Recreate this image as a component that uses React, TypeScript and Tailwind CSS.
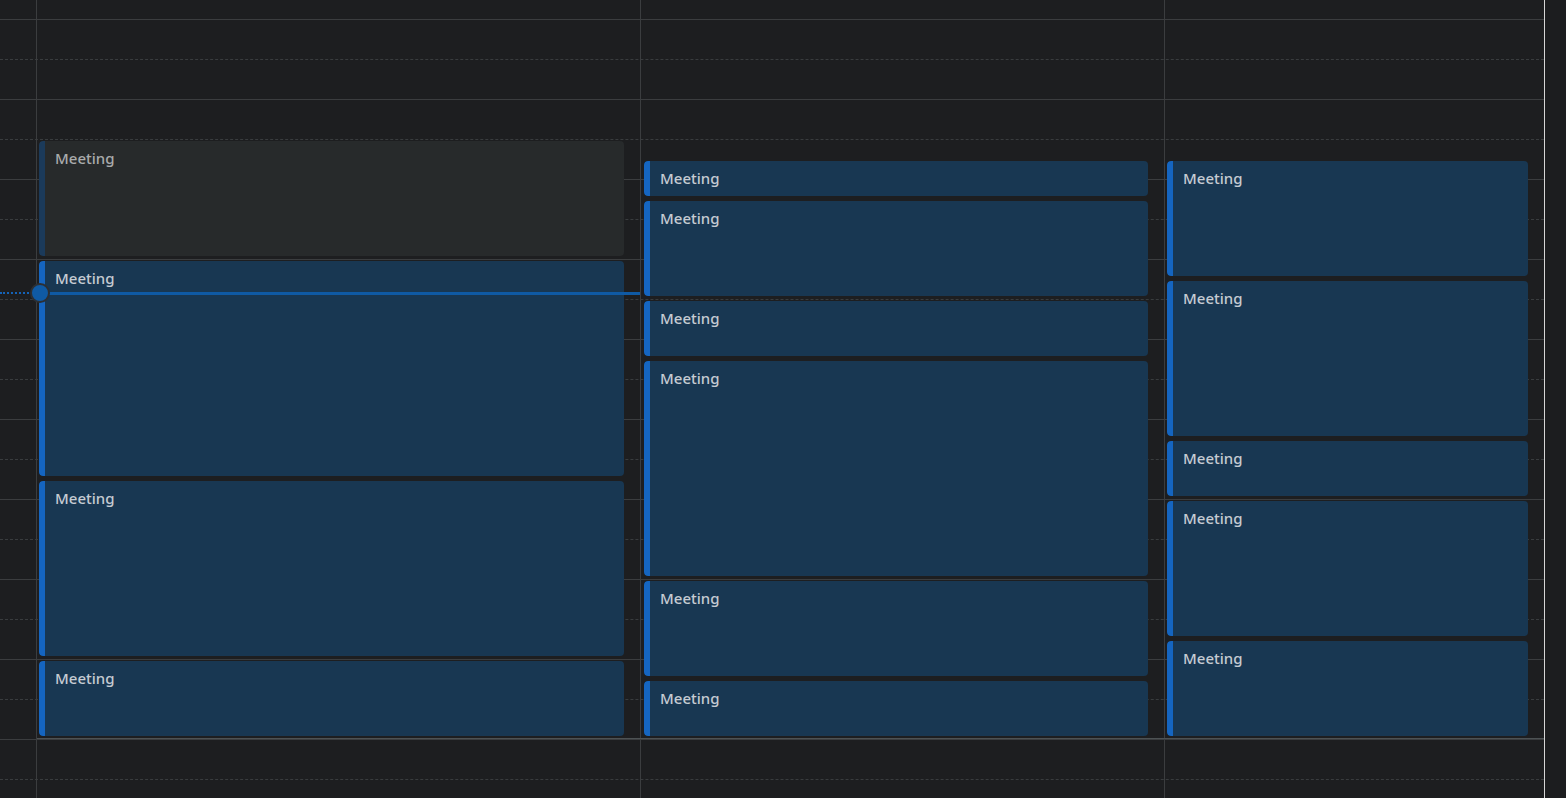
type Ev = { top: number; bottom: number; past?: boolean };

const columns: { width: string; left: number; events: Ev[] }[] = [
  {
    width: 'w-[604px]',
    left: 2,
    events: [
      { top: 141, bottom: 256, past: true },
      { top: 261, bottom: 476 },
      { top: 481, bottom: 656 },
      { top: 661, bottom: 736 },
    ],
  },
  {
    width: 'w-[524px]',
    left: 3,
    events: [
      { top: 161, bottom: 196 },
      { top: 201, bottom: 296 },
      { top: 301, bottom: 356 },
      { top: 361, bottom: 576 },
      { top: 581, bottom: 676 },
      { top: 681, bottom: 736 },
    ],
  },
  {
    width: 'w-[380px]',
    left: 2,
    events: [
      { top: 161, bottom: 276 },
      { top: 281, bottom: 436 },
      { top: 441, bottom: 496 },
      { top: 501, bottom: 636 },
      { top: 641, bottom: 736 },
    ],
  },
];

function EventCard({ ev, left }: { ev: Ev; left: number }) {
  return (
    <div
      className={
        'absolute right-[16px] flex overflow-hidden rounded-[4px] ' +
        (ev.past ? 'bg-[#272a2b]' : 'bg-[#183752]')
      }
      style={{ top: ev.top, height: ev.bottom - ev.top, left }}
    >
      <div
        className={
          'w-[6px] shrink-0 rounded-l-[4px] ' +
          (ev.past ? 'bg-[#1b3a5a]' : 'bg-[#1565c0]')
        }
      />
      <div
        className={
          'pl-[10px] pt-[7px] text-[15px] leading-[20px] font-medium ' +
          (ev.past ? 'text-[#a9abab]' : 'text-[#c5cbd2]')
        }
      >
        Meeting
      </div>
    </div>
  );
}

export default function App() {
  const rows = Array.from({ length: 19 }, (_, i) => i);

  return (
    <div className="relative h-[798px] w-[1566px] overflow-hidden bg-[#1d1e20] font-['Noto_Sans',sans-serif]">
      {/* horizontal grid lines */}
      <div className="pointer-events-none absolute left-0 top-0 flex w-[1544px] flex-col">
        <div className="h-[20px] border-b border-[#3b3d3f]" />
        {rows.map((i) => (
          <div
            key={i}
            className={
              'h-[40px] border-b ' +
              (i % 2 === 0 ? 'border-dashed border-[#393c3e]' : 'border-solid border-[#3b3d3f]')
            }
          />
        ))}
      </div>

      <div className="relative flex h-full">
        <div className="w-[36px] shrink-0" />
        {columns.map((col, ci) => (
          <div
            key={ci}
            className={'relative h-full shrink-0 border-l border-[#3b3d3f] ' + col.width}
          >
            {col.events.map((ev, i) => (
              <EventCard key={i} ev={ev} left={col.left} />
            ))}
          </div>
        ))}
        <div className="h-full w-[22px] shrink-0 border-l border-[#d6d6d6] bg-[#1c1d1f]" />
      </div>

      {/* bottom edge of the scroll area */}
      <div className="absolute left-[37px] top-[738px] h-px w-[1507px] bg-[#4d5254]" />

      {/* current time indicator */}
      <div className="absolute left-0 top-[292px] w-[36px] border-t-2 border-dotted border-[#1463b8]" />
      <div className="absolute left-[40px] top-[292px] h-[3px] w-[600px] bg-[#0f5aa4]" />
      <div className="absolute left-[30px] top-[283px] h-[20px] w-[20px] rounded-full border-2 border-[#2c2f33] bg-[#0f5aa4]" />
    </div>
  );
}
